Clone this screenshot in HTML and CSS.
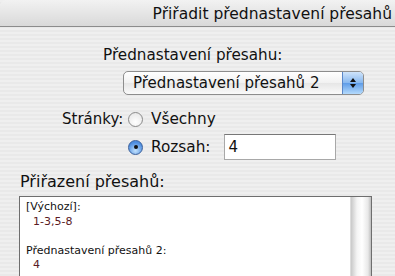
FILE: index.html
```html
<!DOCTYPE html>
<html lang="cs">
<head>
    <meta charset="UTF-8">
    <title>Přiřadit přednastavení přesahů</title>
    <link rel="stylesheet" href="styles.css">
</head>
<body>
    <div class="window">
        <div class="titlebar">Přiřadit přednastavení přesahů</div>

        <div class="content">
            <div class="preset-label">Přednastavení přesahu:</div>
            <div class="popup">
                <span class="popup-text">Přednastavení přesahů 2</span>
                <span class="popup-arrows">
                    <svg width="8" height="14" viewBox="0 0 8 14">
                        <path d="M4 2 L7 6 L1 6 Z" fill="#111"/>
                        <path d="M4 12 L7 8 L1 8 Z" fill="#111"/>
                    </svg>
                </span>
            </div>

            <div class="pages">
                <div class="pages-row">
                    <span class="pages-label">Stránky:</span>
                    <span class="radio"></span>
                    <span class="radio-text">Všechny</span>
                </div>
                <div class="pages-row range-row">
                    <span class="radio checked"></span>
                    <span class="radio-text">Rozsah:</span>
                    <span class="range-field">4</span>
                </div>
            </div>

            <div class="assign-label">Přiřazení přesahů:</div>
            <div class="listbox">
                <div class="list-text">
                    <div class="list-head">[Výchozí]:</div>
                    <div class="list-value">1-3,5-8</div>
                    <div class="list-gap"></div>
                    <div class="list-head">Přednastavení přesahů 2:</div>
                    <div class="list-value">4</div>
                </div>
                <div class="scrollbar"></div>
            </div>
        </div>
    </div>
</body>
</html>
```

FILE: styles.css
```css
html, body {
    margin: 0;
    padding: 0;
    height: 100%;
    overflow: hidden;
}
body {
    font-family: 'DejaVu Sans', 'Liberation Sans', sans-serif;
    color: #111;
    background: repeating-linear-gradient(to bottom, #efefef 0, #efefef 2px, #e9e9e9 2px, #e9e9e9 4px);
}
.titlebar {
    height: 27px;
    box-sizing: border-box;
    background: linear-gradient(to bottom, #f2f2f2, #d9d9d9);
    border-bottom: 1px solid #8c8c8c;
    border-top-left-radius: 6px;
    text-align: right;
    padding-right: 3px;
    font-size: 15.5px;
    line-height: 28px;
    color: #111;
}
.content {
    padding-top: 18px;
}
.preset-label {
    margin-left: 103px;
    font-size: 15.2px;
    line-height: 20px;
}
.popup {
    display: flex;
    margin: 6px 0 0 123px;
    width: 241px;
    height: 24px;
    box-sizing: border-box;
    border: 1px solid #8d8d8d;
    border-radius: 5px;
    background: linear-gradient(to bottom, #ffffff, #f1f1f1 50%, #e6e6e6 51%, #fafafa);
    overflow: hidden;
}
.popup-text {
    flex: 1;
    padding-left: 9px;
    font-size: 15px;
    line-height: 22px;
}
.popup-arrows {
    width: 20px;
    display: flex;
    align-items: center;
    justify-content: center;
    border-left: 1px solid #5a87c8;
    background: linear-gradient(to bottom, #cfe4fb, #86b7ef 50%, #5e9ce8 51%, #b4dafc);
}
.pages {
    margin-top: 14px;
}
.pages-row {
    display: flex;
    align-items: center;
    height: 20px;
}
.pages-label {
    margin-left: 62px;
    width: 66px;
    font-size: 15px;
}
.radio {
    width: 15px;
    height: 15px;
    box-sizing: border-box;
    border-radius: 50%;
    border: 1px solid #8a8a8a;
    background: radial-gradient(circle at 50% 70%, #ffffff, #e4e4e4);
    margin-right: 8px;
}
.radio.checked {
    position: relative;
    border-color: #3a5f9a;
    background: radial-gradient(circle at 50% 75%, #c3e2fd, #4d8de0 70%);
}
.radio.checked::after {
    content: "";
    position: absolute;
    left: 4.5px;
    top: 4.5px;
    width: 4px;
    height: 4px;
    border-radius: 50%;
    background: #111;
}
.radio-text {
    font-size: 15.3px;
}
.range-row {
    margin-top: 8px;
}
.range-row .radio {
    margin-left: 128px;
}
.range-field {
    margin-left: 13px;
    width: 112px;
    height: 26px;
    box-sizing: border-box;
    background: #fff;
    border: 1px solid #a8a8a8;
    border-top-color: #777;
    padding-left: 4px;
    font-size: 15px;
    line-height: 24px;
}
.assign-label {
    margin: 15px 0 0 20px;
    font-size: 16px;
    line-height: 20px;
}
.listbox {
    display: flex;
    margin: 4px 0 0 19px;
    width: 353px;
    height: 120px;
    box-sizing: border-box;
    border: 1px solid #6e6e6e;
    background: #fff;
}
.list-text {
    flex: 1;
    padding: 3px 0 0 6px;
    font-size: 11px;
    line-height: 14.5px;
}
.list-value {
    padding-left: 7px;
    color: #5a1a24;
}
.list-gap {
    height: 14.5px;
}
.scrollbar {
    width: 20px;
    background: linear-gradient(to right, #c8c8c8, #f4f4f4 30%, #ffffff 55%, #e8e8e8 85%, #bdbdbd);
    border-left: 1px solid #dcdcdc;
}
```
